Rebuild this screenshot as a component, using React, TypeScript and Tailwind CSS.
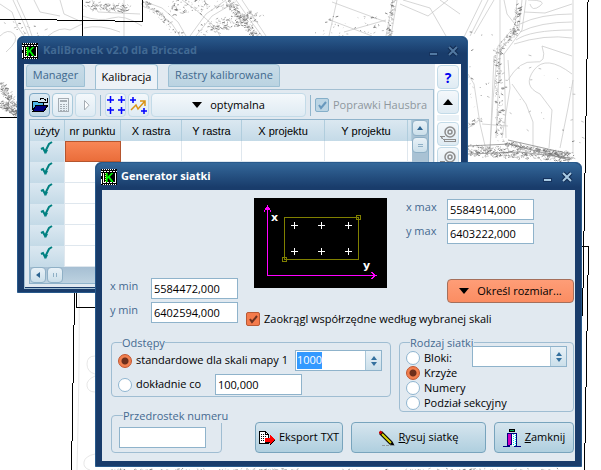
import React, { useEffect, useRef } from 'react';

const columns = ['użyty', 'nr punktu', 'X rastra', 'Y rastra', 'X projektu', 'Y projektu', ''];
const rows = [1, 2, 3, 4, 5, 6];

// seeded generator, keeps the scanned map the same on every render
function createRandom(seed: number) {
    let s = seed;
    return () => {
        s = (s * 16807) % 2147483647;
        return s / 2147483647;
    };
}

type Road = { from: [number, number]; to: [number, number]; spread: number; count: number };

const roads: Road[] = [
    { from: [0, 20], to: [50, 36], spread: 12, count: 22 },
    { from: [0, 84], to: [17, 112], spread: 9, count: 160 },
    { from: [0, 104], to: [17, 114], spread: 6, count: 120 },
    { from: [86, 6], to: [126, 8], spread: 8, count: 110 },
    { from: [142, 0], to: [180, 36], spread: 6, count: 80 },
    { from: [170, 8], to: [232, 0], spread: 16, count: 140 },
    { from: [200, 30], to: [258, 16], spread: 12, count: 160 },
    { from: [228, 0], to: [256, 36], spread: 8, count: 150 },
    { from: [315, 28], to: [385, 22], spread: 20, count: 45 },
    { from: [393, 0], to: [388, 36], spread: 4, count: 60 },
    { from: [518, 6], to: [514, 36], spread: 5, count: 60 },
    { from: [514, 30], to: [498, 52], spread: 6, count: 50 },
    { from: [497, 50], to: [500, 138], spread: 8, count: 130 },
    { from: [468, 150], to: [570, 156], spread: 11, count: 420 },
    { from: [505, 143], to: [570, 158], spread: 5, count: 200 },
    { from: [468, 125], to: [482, 118], spread: 4, count: 22 },
    { from: [480, 60], to: [575, 130], spread: 70, count: 40 },
    { from: [468, 70], to: [474, 110], spread: 5, count: 8 },
    { from: [110, 470], to: [300, 470], spread: 2, count: 90 },
    { from: [330, 470], to: [560, 470], spread: 2, count: 70 },
];

function scatter() {
    const random = createRandom(4711);
    let dark = '';
    let light = '';
    roads.forEach((r) => {
        for (let i = 0; i < r.count; i++) {
            const t = random();
            const x = r.from[0] + (r.to[0] - r.from[0]) * t + (random() - 0.5) * r.spread;
            const y = r.from[1] + (r.to[1] - r.from[1]) * t + (random() - 0.5) * r.spread;
            const piece = `M${x.toFixed(1)} ${y.toFixed(1)}l${(random() * 4 - 1).toFixed(1)} ${(random() * 3 - 1.5).toFixed(1)}`;
            if (random() > 0.6) dark += piece;
            else light += piece;
        }
    });
    return { dark, light };
}

const marks = scatter();

function MapBackground() {
    return (
        <svg className="absolute inset-0 h-full w-full" viewBox="0 0 601 470" preserveAspectRatio="xMinYMin slice" fill="none" aria-hidden="true">
            <g stroke="#c4c4c4" strokeWidth="0.7">
                <path d="M0 4L12 12L17 26L24 36M13 0L24 24L29 36M17 0L27 22L32 36M0 36Q8 28 14 34T6 52M34 0L40 12L60 16M60 0L64 14L82 22M48 36Q60 26 70 30L82 24" />
                <path d="M82 16Q100 22 112 18T142 26M92 0L98 12L140 14M124 0V36M84 28Q100 24 120 32M142 6L158 12L172 24L180 36M146 2L162 8L178 22L186 36" />
                <path d="M190 36L206 14L226 0M196 36L212 16L232 4M182 0L196 10L214 26L220 36M236 0L250 20L262 36M242 0L254 18L266 36" />
                <path d="M337 0L329 36M332 2L386 22M330 20L372 36M386 20L344 32M393 0L386 36M397 0L391 36M403 0L430 8L446 36M448 0L428 16L400 4M440 0L460 14" />
                <path d="M482 0L464 37M488 0L470 36M494 0L474 34M522 0L519 28L500 50L496 138M517 0L515 26L498 46L493 100L490 150M526 0L522 30L504 54L506 138" />
                <path d="M500 0V80M504 0L507 14L518 28M530 4Q532 12 540 6T528 0M524 12L545 13L572 4M520 24Q540 14 572 14M520 32Q540 22 572 22M516 40Q530 30 572 30M514 44Q545 34 572 38" />
                <path d="M573 0V154M508 80Q520 60 534 62T542 46L572 56M512 84L526 104L533 122V148M572 74Q546 54 534 70T540 94L552 110L549 148M560 148L568 108L573 80" />
                <path d="M468 74L474 84L480 124L486 150M508 60L510 88L502 138M482 124L508 126M468 128L482 118M490 150L494 56" />
                <path d="M79 294Q80 350 77 470M95 356Q87 356 87 364T95 374M95 376Q86 380 87 386T95 392M95 454Q85 456 84 462T90 470" stroke="#dddddd" />
            </g>
            <path d={marks.light} stroke="#b4b4b4" strokeWidth="0.8" />
            <path d={marks.dark} stroke="#6f6f6f" strokeWidth="0.8" />
            <path d="M468 146L510 144L570 160M468 154L520 152L570 158M508 140L570 154" stroke="#8a8a8a" strokeWidth="0.8" />
            <g stroke="#000" shapeRendering="crispEdges">
                <path d="M0 19.5H57M57 20.5H115M115 21.5H143M82.5 0V36M142.5 0V22M0 117.5H17" />
                <path d="M588.5 0V2M587.5 2V59M586.5 59V116M585.5 116V173M584.5 173V231M583.5 231V288M582.5 288V316M582 246.5H588M588.5 246V275M587.5 275V331M586.5 331V387M585.5 387V443M584.5 443V470" />
                <path d="M74.5 293V325M73.5 325V383M72.5 383V441M71.5 441V470M76.5 293V307M76 307.5H96" />
            </g>
        </svg>
    );
}

function AppIcon() {
    return (
        <svg className="h-4 w-4 shrink-0" viewBox="0 0 16 16" shapeRendering="crispEdges" aria-hidden="true">
            <rect width="16" height="16" fill="#000" />
            <g fill="none" stroke="#fff">
                <path d="M1 0.5H15M2 15.5H15" strokeDasharray="1 1" />
                <path d="M0 2.5H16M3 13.5H15" strokeDasharray="2 1" />
                <path d="M0.5 4V7M0.5 10V15M2.5 4V14M14.5 4V14" />
                <path d="M4.5 4V13M12.5 4V12" strokeDasharray="1 1" />
            </g>
            <rect x="5" y="3" width="8" height="10" fill="#000" />
            <text x="4" y="12.5" fontSize="12" fontWeight="bold" fontFamily="Liberation Sans, sans-serif" fill="#00f800">K</text>
        </svg>
    );
}

function WindowButtons({ color }: { color: string }) {
    return (
        <div className={`ml-auto flex items-center gap-2 ${color}`}>
            <button type="button" aria-label="Minimalizuj" className="h-4 w-3">
                <svg viewBox="0 0 12 16" className="h-4 w-3" fill="currentColor"><rect x="2.5" y="9.5" width="8" height="3" stroke="#16335e" /></svg>
            </button>
            <button type="button" aria-label="Zamknij okno" className="h-4 w-3">
                <svg viewBox="0 0 12 16" className="h-4 w-3" fill="none">
                    <path d="M2 4L10 12M10 4L2 12" stroke="#102a50" strokeWidth="4" />
                    <path d="M2 4L10 12M10 4L2 12" stroke="currentColor" strokeWidth="2" />
                </svg>
            </button>
        </div>
    );
}

const toolTone = 'border-[#c3dbe8] from-[#f4f8fb] to-[#dfebf3]';

function ToolButton({ label, tone = toolTone, width = 'w-[21px]', children }: { label: string; tone?: string; width?: string; children: React.ReactNode }) {
    return (
        <button type="button" aria-label={label} className={`flex h-6 shrink-0 items-center justify-center rounded-sm border bg-linear-to-b ${tone} ${width}`}>
            {children}
        </button>
    );
}

function StampIcon() {
    return (
        <svg viewBox="0 0 18 18" className="h-[18px] w-[18px] shrink-0" fill="none" stroke="#8d8d8d" aria-hidden="true">
            <circle cx="11" cy="7" r="5" strokeWidth="1.5" />
            <circle cx="11" cy="7" r="2" strokeWidth="1.5" />
            <path d="M1 11.5H6M2 12L5 15M3 12V14" />
            <rect x="5.5" y="14.5" width="11" height="2" />
        </svg>
    );
}

function Spinner({ children }: { children: React.ReactNode }) {
    return (
        <div className="flex h-[21px] border border-[#8fb3cb] bg-white">
            {children}
            <div className="flex w-4 shrink-0 flex-col border-l border-[#a9c6d8] bg-linear-to-b from-[#e8f1f7] to-[#cbdfea]">
                <button type="button" aria-label="Więcej" className="flex flex-1 items-end justify-center pb-px">
                    <svg viewBox="0 0 6 4" className="h-1 w-1.5"><path d="M3 0L6 4H0Z" fill="#33709e" /></svg>
                </button>
                <button type="button" aria-label="Mniej" className="flex flex-1 items-start justify-center pt-px">
                    <svg viewBox="0 0 6 4" className="h-1 w-1.5"><path d="M0 0H6L3 4Z" fill="#33709e" /></svg>
                </button>
            </div>
        </div>
    );
}

function Coordinate({ id, label, value }: { id: string; label: string; value: string }) {
    return (
        <div className="flex">
            <label htmlFor={id} className="w-[41px] shrink-0 leading-4 text-[#456a90]">{label}</label>
            <input id={id} defaultValue={value} className="h-[21px] w-[87px] border border-[#8fb3cb] bg-white px-0.5 outline-none" />
        </div>
    );
}

const radioStyle = 'h-3.5 w-3.5 shrink-0 appearance-none rounded-full border border-[#8fb5d0] bg-white checked:border-[#c0522c] checked:bg-[radial-gradient(circle,#6d2f1c_0px,#6d2f1c_3px,#f2804f_4px,#f2804f_7px)]';

function KindOption({ label, checked }: { label: string; checked?: boolean }) {
    return (
        <label className="flex h-[15px] items-center gap-1 leading-[15px]">
            <input type="radio" name="kind" defaultChecked={checked} className={radioStyle} />
            {label}
        </label>
    );
}

function GridPreview() {
    return (
        <svg className="h-[90px] w-[133px] shrink-0 bg-black" viewBox="0 0 133 90" fill="none" shapeRendering="crispEdges" role="img" aria-label="Podgląd siatki">
            <g stroke="#ff00ff">
                <path d="M13.5 8V77.5H122" />
                <path d="M10 13.5L13.5 8L17 13.5M117 74L122 77.5L117 81M12 10.5H15M11 11.5H16M119.5 76V79" />
            </g>
            <g stroke="#808000">
                <rect x="30.5" y="19.5" width="74" height="42" />
                <rect x="102.5" y="17.5" width="4" height="4" />
                <rect x="28.5" y="59.5" width="4" height="4" />
            </g>
            <path d="M37 27.5H44M40.5 24V31M64 27.5H71M67.5 24V31M91 27.5H98M94.5 24V31M37 53.5H44M40.5 50V57M64 53.5H71M67.5 50V57M91 53.5H98M94.5 50V57" stroke="#fff" />
            <text x="17" y="23" fontSize="11" fontWeight="bold" fontFamily="DejaVu Sans, sans-serif" fill="#fff">x</text>
            <text x="109" y="71" fontSize="11" fontWeight="bold" fontFamily="DejaVu Sans, sans-serif" fill="#fff">y</text>
        </svg>
    );
}

function CalibrationWindow() {
    return (
        <section className="absolute top-9 left-[17px] w-[451px] rounded-t-md border border-[#285a8c] bg-[#193c6b] px-1.5 pb-[5px]">
            <header className="-mx-1.5 flex h-[27px] items-center gap-[5px] rounded-t-md bg-linear-to-b from-[#29598c] to-[#193c6b] to-60% pr-2 pl-1">
                <AppIcon />
                <h1 className="font-bold text-[#426a94]">KaliBronek v2.0 dla Bricscad</h1>
                <WindowButtons color="text-[#5279a2]" />
            </header>
            <div className="flex h-[223px] bg-[#e1e9f0]">
                <div className="flex min-w-0 flex-1 flex-col">
                    <nav className="flex items-start px-0.5">
                        <button type="button" className="h-[23px] w-[59px] rounded-t-sm border border-[#9dc0d4] bg-linear-to-b from-[#c9dce8] to-[#bad3e1] text-[#40688e]">Manager</button>
                        <button type="button" className="ml-2.5 h-[25px] w-[63px] rounded-t-sm border border-b-0 border-[#9dc0d4] bg-[#edf2f7]">Kalibracja</button>
                        <button type="button" className="ml-2.5 h-[23px] w-28 rounded-t-sm border border-[#9dc0d4] bg-linear-to-b from-[#c9dce8] to-[#bad3e1] whitespace-nowrap text-[#40688e]">Rastry kalibrowane</button>
                    </nav>
                    <div className="flex flex-1 flex-col border border-[#a3bfd2] px-1 pt-[3px] pb-1">
                        <div className="flex items-center gap-0.5">
                            <ToolButton label="Otwórz" tone="border-[#7ca8c5] from-[#dce9f2] to-[#c1d9e7]">
                                <svg viewBox="0 0 16 16" className="h-4 w-4 shrink-0" shapeRendering="crispEdges">
                                    <path d="M0 4H5L6 5H12V9H5L1 13H0Z" fill="#000" />
                                    <path d="M1 5H5L6 6H11V8H4L1 11Z" fill="#50b8e8" />
                                    <path d="M4 8H16L12 14H1Z" fill="#000080" stroke="#000" />
                                    <path d="M8 2.5Q10 0 13 2.5L14 4M15 1V5H11" fill="none" stroke="#000" />
                                </svg>
                            </ToolButton>
                            <ToolButton label="Oblicz" tone="border-[#a9cadb] from-[#f4f8fb] to-[#dfebf3]">
                                <svg viewBox="0 0 16 16" className="h-4 w-4 shrink-0" fill="none" stroke="#a5adb4" shapeRendering="crispEdges">
                                    <rect x="3.5" y="1.5" width="10" height="13" />
                                    <path d="M5 4H12" strokeWidth="2" />
                                    <path d="M5 7.5H12M5 9.5H12M5 11.5H12M5 13.5H12" strokeDasharray="2 1" />
                                </svg>
                            </ToolButton>
                            <ToolButton label="Start">
                                <svg viewBox="0 0 16 16" className="h-4 w-4 shrink-0" fill="#fff" stroke="#a5adb4"><path d="M6.5 3.5V13L11 8.2Z" /></svg>
                            </ToolButton>
                            <span className="mx-0.5 h-[21px] w-px bg-[#92b6cc]" />
                            <ToolButton label="Punkty">
                                <svg viewBox="0 0 18 18" className="h-[18px] w-[18px] shrink-0" fill="none" stroke="#0000ff" strokeWidth="1.5"><path d="M0 4H7M3.5 0V7M11 4H18M14.5 0V7M0 14H7M3.5 11V18M11 14H18M14.5 11V18" /></svg>
                            </ToolButton>
                            <ToolButton label="Transformacja">
                                <svg viewBox="0 0 18 18" className="h-[18px] w-[18px] shrink-0" fill="none">
                                    <path d="M0 4H6M3 1V7M11 15H17M14 12V18" stroke="#0000ff" strokeWidth="1.5" />
                                    <path d="M1 14L6 9L8 13L15 5M10 5H15V10" stroke="#d99316" strokeWidth="1.5" />
                                </svg>
                            </ToolButton>
                            <button type="button" className="flex h-6 flex-1 items-center justify-center gap-2 rounded-sm border border-[#c3dbe8] bg-linear-to-b from-[#f4f8fb] to-[#dfebf3]">
                                <svg viewBox="0 0 10 6" className="h-1.5 w-2.5"><path d="M0 0H10L5 6Z" /></svg>
                                optymalna
                            </button>
                            <span className="mx-0.5 h-[21px] w-px bg-[#92b6cc]" />
                            <label className="flex w-[114px] items-center gap-1 whitespace-nowrap text-[#8e979e]">
                                <span className="relative flex shrink-0">
                                    <input type="checkbox" defaultChecked disabled className="h-3.5 w-3.5 appearance-none rounded-xs border border-[#85afc9] bg-[#bcd5e4]" />
                                    <svg viewBox="0 0 14 14" className="absolute inset-0" fill="none"><path d="M4 7L6 10L11 4" stroke="#6898bd" strokeWidth="2" /></svg>
                                </span>
                                Poprawki Hausbra
                            </label>
                        </div>
                        <div className="mt-0.5 flex flex-1 overflow-hidden border border-[#8fb3cb] bg-white">
                            <div className="flex min-w-0 flex-1 flex-col">
                                <table className="w-full table-fixed border-separate border-spacing-0">
                                    <colgroup>
                                        <col className="w-[35px]" />
                                        <col className="w-14" />
                                        <col className="w-[61px]" />
                                        <col className="w-[60px]" />
                                        <col className="w-[83px]" />
                                        <col className="w-[83px]" />
                                        <col />
                                    </colgroup>
                                    <thead>
                                        <tr className="bg-linear-to-b from-[#dbe8f1] to-[#c4dae7] font-['Liberation_Sans',sans-serif] leading-4">
                                            {columns.map((c, i) => (
                                                <th key={i} className="h-[21px] border-r border-[#b0cddd] p-0 font-normal whitespace-nowrap">{c}</th>
                                            ))}
                                        </tr>
                                    </thead>
                                    <tbody>
                                        {rows.map((r) => (
                                            <tr key={r}>
                                                <td className="h-[21px] border-r border-[#dfe7ee] bg-linear-to-b from-[#dbe8f1] to-[#c4dae7] p-0 align-top">
                                                    <svg viewBox="0 0 14 14" className="mx-auto h-3.5 w-3.5" fill="none" role="img" aria-label="użyty">
                                                        <path d="M1 8L3 7L5 11L9 3L12 1" stroke="#008080" strokeWidth="2" />
                                                        <path d="M4 9L6 13L8 9Z" fill="#008080" />
                                                    </svg>
                                                </td>
                                                <td className={r === 1 ? 'border border-[#b5552e] bg-linear-to-b from-[#f88656] to-[#ea6d3a] p-0' : 'border-r border-b border-[#dfe7ee] p-0'} />
                                                <td className="border-r border-b border-[#dfe7ee] p-0" />
                                                <td className="border-r border-b border-[#dfe7ee] p-0" />
                                                <td className="border-r border-b border-[#dfe7ee] p-0" />
                                                <td className="border-r border-b border-[#dfe7ee] p-0" />
                                                <td className="border-b border-[#dfe7ee] p-0" />
                                            </tr>
                                        ))}
                                    </tbody>
                                </table>
                                <div className="mt-auto flex h-4 shrink-0 gap-px bg-linear-to-b from-[#a6bfd3] to-[#bdd2e0]">
                                    <button type="button" aria-label="W lewo" className="flex w-4 items-center justify-center rounded-sm border border-[#8fb0c6] bg-linear-to-b from-[#e8f1f7] to-[#cbdfea]">
                                        <svg viewBox="0 0 4 6" className="h-1.5 w-1"><path d="M4 0V6L0 3Z" fill="#2c6491" /></svg>
                                    </button>
                                    <button type="button" aria-label="Suwak poziomy" className="flex w-4 items-center justify-center gap-0.5 rounded-sm border border-[#8fb0c6] bg-linear-to-b from-[#e8f1f7] to-[#cbdfea]">
                                        <span className="h-1 w-px bg-[#8fb0c6]" />
                                        <span className="h-1 w-px bg-[#8fb0c6]" />
                                    </button>
                                </div>
                            </div>
                            <div className="flex w-4 flex-col gap-px bg-[#a9c2d4]">
                                <button type="button" aria-label="W górę" className="flex h-4 items-center justify-center rounded-sm border border-[#8fb0c6] bg-linear-to-b from-[#e8f1f7] to-[#cbdfea]">
                                    <svg viewBox="0 0 6 4" className="h-1 w-1.5"><path d="M3 0L6 4H0Z" fill="#2c6491" /></svg>
                                </button>
                                <button type="button" aria-label="Suwak pionowy" className="flex h-4 flex-col items-center justify-center gap-px rounded-sm border border-[#8fb0c6] bg-linear-to-b from-[#e8f1f7] to-[#cbdfea]">
                                    <span className="h-px w-[5px] bg-[#8fb0c6]" />
                                    <span className="h-px w-[5px] bg-[#8fb0c6]" />
                                </button>
                            </div>
                        </div>
                    </div>
                </div>
                <aside className="ml-px flex w-[26px] flex-col gap-px bg-white px-0.5 pt-px">
                    <ToolButton label="Pomoc" width="w-full">
                        <span className="text-[14px] font-bold text-[#0000f0]">?</span>
                    </ToolButton>
                    <ToolButton label="Zwiń" width="w-full">
                        <svg viewBox="0 0 10 6" className="h-1.5 w-2.5"><path d="M5 0L10 6H0Z" /></svg>
                    </ToolButton>
                    <span className="h-1.5 bg-[#eaf2f7]" />
                    <ToolButton label="Stempel 1" width="w-full"><StampIcon /></ToolButton>
                    <ToolButton label="Stempel 2" width="w-full"><StampIcon /></ToolButton>
                </aside>
            </div>
        </section>
    );
}

const actionStyle = 'flex h-[31px] items-center justify-center gap-1 rounded-sm border border-[#78a4bd] bg-linear-to-b from-[#d6e5ee] to-[#afcfdf] whitespace-nowrap';

function GeneratorWindow() {
    const scaleRef = useRef<HTMLInputElement>(null);

    useEffect(() => {
        scaleRef.current?.focus();
        scaleRef.current?.select();
    }, []);

    return (
        <section className="absolute top-[162px] left-[95px] w-[487px] rounded-t-md border border-[#285a8c] bg-[#193c6b] px-1.5 pb-[5px]">
            <header className="-mx-1.5 flex h-[27px] items-center gap-1 rounded-t-md bg-linear-to-b from-[#34689a] to-[#193c6b] to-90% pr-2 pl-[5px]">
                <AppIcon />
                <h2 className="font-bold text-white">Generator siatki</h2>
                <WindowButtons color="text-[#a9cbe4]" />
            </header>
            <form className="bg-[#e1e9f0] pt-2 pr-px pb-2 pl-2">
                <div className="flex">
                    <div className="flex flex-col justify-end gap-[3px] pb-1">
                        <Coordinate id="xmin" label="x min" value="5584472,000" />
                        <Coordinate id="ymin" label="y min" value="6402594,000" />
                    </div>
                    <div className="ml-2 flex-1">
                        <div className="flex pl-2">
                            <GridPreview />
                            <div className="flex flex-1 flex-col gap-[3px] pt-px pl-[19px]">
                                <Coordinate id="xmax" label="x max" value="5584914,000" />
                                <Coordinate id="ymax" label="y max" value="6403222,000" />
                                <button type="button" className="mt-8 flex h-6 w-[127px] items-center justify-center gap-2 self-end rounded-sm border border-[#a56f5b] bg-linear-to-b from-[#fe9d77] to-[#fb8d62] whitespace-nowrap">
                                    <svg viewBox="0 0 10 6" className="h-1.5 w-2.5"><path d="M0 0H10L5 6Z" /></svg>
                                    Określ rozmiar...
                                </button>
                            </div>
                        </div>
                        <label className="mt-2 flex items-center gap-1 leading-4">
                            <span className="relative flex">
                                <input type="checkbox" defaultChecked className="h-3.5 w-3.5 appearance-none rounded-xs border border-[#b85a36] bg-[#f47b4c]" />
                                <svg viewBox="0 0 14 14" className="pointer-events-none absolute inset-0" fill="none"><path d="M4 7L6 10L11 4" stroke="#6d3220" strokeWidth="2" /></svg>
                            </span>
                            Zaokrągl współrzędne według wybranej skali
                        </label>
                    </div>
                </div>
                <div className="mt-2 ml-px grid grid-cols-[111px_1fr_175px] grid-rows-[auto_15px_41px]">
                    <fieldset className="col-span-2 mr-2 rounded-sm border border-[#9fbdd2] px-1.5 pb-px">
                        <legend className="ml-1 leading-[15px] text-[#456a90]">Odstępy</legend>
                        <div className="flex flex-col gap-[3px]">
                            <div className="flex h-[21px] items-center">
                                <label className="flex w-[177px] items-center gap-1 whitespace-nowrap">
                                    <input type="radio" name="spacing" defaultChecked className={radioStyle} />
                                    standardowe dla skali mapy 1
                                </label>
                                <Spinner>
                                    <input ref={scaleRef} aria-label="Skala mapy" defaultValue="1000" className="w-[69px] px-px outline-none selection:bg-[#3399ff] selection:text-white" />
                                </Spinner>
                            </div>
                            <div className="flex h-[21px] items-center">
                                <label className="flex w-[97px] items-center gap-1 whitespace-nowrap">
                                    <input type="radio" name="spacing" className={radioStyle} />
                                    dokładnie co
                                </label>
                                <input aria-label="Odstęp" defaultValue="100,000" className="h-[21px] w-[87px] border border-[#8fb3cb] bg-white px-0.5 outline-none" />
                            </div>
                        </div>
                    </fieldset>
                    <fieldset className="relative row-span-2 rounded-sm border border-[#9fbdd2] px-1.5 pb-px">
                        <legend className="ml-1 leading-[15px] text-[#456a90]">Rodzaj siatki</legend>
                        <KindOption label="Bloki:" />
                        <KindOption label="Krzyże" checked />
                        <KindOption label="Numery" />
                        <KindOption label="Podział sekcyjny" />
                        <div className="absolute -top-1 right-1.5">
                            <Spinner>
                                <input aria-label="Bloki" className="w-[77px] px-px outline-none" />
                            </Spinner>
                        </div>
                    </fieldset>
                    <fieldset className="row-span-2 w-[111px] min-w-0 self-end rounded-sm border border-[#9fbdd2] px-[7px] pb-1">
                        <legend className="ml-1 leading-[15px] whitespace-nowrap text-[#456a90]">Przedrostek numeru</legend>
                        <input aria-label="Przedrostek numeru" className="mt-1 block h-[21px] w-[87px] border border-[#8fb3cb] bg-white px-px outline-none" />
                    </fieldset>
                    <div className="col-span-2 col-start-2 row-start-3 flex gap-2 self-end pl-[33px]">
                        <button type="button" className={`w-[88px] ${actionStyle}`}>
                            <svg viewBox="0 0 16 16" className="h-4 w-4 shrink-0" shapeRendering="crispEdges">
                                <path d="M0.5 1.5H6.5L9.5 4.5V13.5H0.5Z" fill="#fff" stroke="#000" />
                                <path d="M6.5 1.5V4.5H9.5" fill="none" stroke="#000" />
                                <path d="M2 4.5H5M2 6.5H8M2 8.5H6M2 10.5H6" stroke="#000" strokeDasharray="1 1" />
                                <path d="M6 8H11V5L16 10L11 15V12H6Z" fill="#f00" />
                                <path d="M6 12.5H11M11 15L16 10" stroke="#000" />
                            </svg>
                            Eksport TXT
                        </button>
                        <button type="button" className={`flex-1 ${actionStyle}`}>
                            <svg viewBox="0 0 16 16" className="h-4 w-4 shrink-0" fill="none">
                                <path d="M1.5 2.5L12 13" stroke="#000" strokeWidth="4" />
                                <path d="M3 4L12 13" stroke="#d8d000" strokeWidth="2" />
                                <path d="M0.5 1.5L2.5 3.5" stroke="#d00000" strokeWidth="3" />
                                <path d="M10.5 14.5L13.5 11.5L15.5 15.5Z" fill="#000" />
                                <path d="M3 15.5H14" stroke="#8f9ba3" strokeDasharray="3 1" />
                            </svg>
                            <span><u>R</u>ysuj siatkę</span>
                        </button>
                        <button type="button" className={`w-20 ${actionStyle}`}>
                            <svg viewBox="0 0 18 18" className="h-[18px] w-[18px] shrink-0" shapeRendering="crispEdges">
                                <rect x="6.5" y="0.5" width="5" height="2" fill="#00b050" stroke="#000" />
                                <path d="M4.5 17V4.5H13.5V17M0 17.5H7M11 17.5H18" fill="none" stroke="#000080" />
                                <rect x="9" y="5" width="4" height="12" fill="#fff" />
                                <path d="M10.5 5V16M12.5 6V17" stroke="#00e0e8" strokeDasharray="1 1" />
                                <path d="M5 5H9V15L5 17Z" fill="#d000c0" />
                                <path d="M8.5 5V15L5 17" fill="none" stroke="#000080" />
                            </svg>
                            <span><u>Z</u>amknij</span>
                        </button>
                    </div>
                </div>
            </form>
        </section>
    );
}

function App() {
    return (
        <main className="relative h-screen overflow-hidden bg-white font-['Open_Sans','Noto_Sans',sans-serif] text-[11px] text-black">
            <MapBackground />
            <CalibrationWindow />
            <GeneratorWindow />
        </main>
    );
}

export default App;
